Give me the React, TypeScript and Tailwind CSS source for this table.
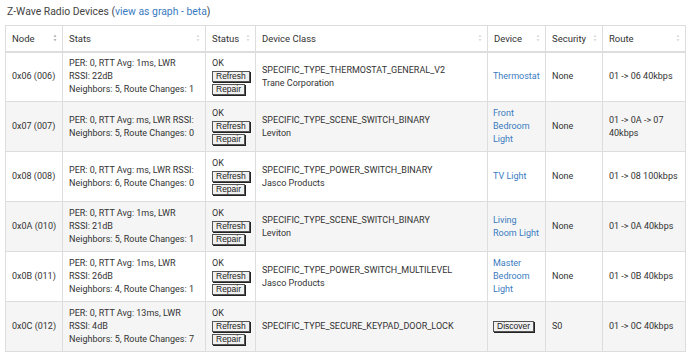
import React from 'react';

type Row = {
  node: string;
  stats: string[];
  cls: string;
  maker?: string;
  device?: string[];
  security: string;
  route: string[];
};

const rows: Row[] = [
  {
    node: '0x06 (006)',
    stats: ['PER: 0, RTT Avg: 1ms, LWR', 'RSSI: 22dB', 'Neighbors: 5, Route Changes: 1'],
    cls: 'SPECIFIC_TYPE_THERMOSTAT_GENERAL_V2',
    maker: 'Trane Corporation',
    device: ['Thermostat'],
    security: 'None',
    route: ['01 -> 06 40kbps'],
  },
  {
    node: '0x07 (007)',
    stats: ['PER: 0, RTT Avg: ms, LWR RSSI:', 'Neighbors: 5, Route Changes: 0'],
    cls: 'SPECIFIC_TYPE_SCENE_SWITCH_BINARY',
    maker: 'Leviton',
    device: ['Front', 'Bedroom', 'Light'],
    security: 'None',
    route: ['01 -> 0A -> 07', '40kbps'],
  },
  {
    node: '0x08 (008)',
    stats: ['PER: 0, RTT Avg: ms, LWR RSSI:', 'Neighbors: 6, Route Changes: 0'],
    cls: 'SPECIFIC_TYPE_POWER_SWITCH_BINARY',
    maker: 'Jasco Products',
    device: ['TV Light'],
    security: 'None',
    route: ['01 -> 08 100kbps'],
  },
  {
    node: '0x0A (010)',
    stats: ['PER: 0, RTT Avg: 1ms, LWR', 'RSSI: 21dB', 'Neighbors: 5, Route Changes: 1'],
    cls: 'SPECIFIC_TYPE_SCENE_SWITCH_BINARY',
    maker: 'Leviton',
    device: ['Living', 'Room Light'],
    security: 'None',
    route: ['01 -> 0A 40kbps'],
  },
  {
    node: '0x0B (011)',
    stats: ['PER: 0, RTT Avg: 1ms, LWR', 'RSSI: 26dB', 'Neighbors: 4, Route Changes: 1'],
    cls: 'SPECIFIC_TYPE_POWER_SWITCH_MULTILEVEL',
    maker: 'Jasco Products',
    device: ['Master', 'Bedroom', 'Light'],
    security: 'None',
    route: ['01 -> 0B 40kbps'],
  },
  {
    node: '0x0C (012)',
    stats: ['PER: 0, RTT Avg: 13ms, LWR', 'RSSI: 4dB', 'Neighbors: 5, Route Changes: 7'],
    cls: 'SPECIFIC_TYPE_SECURE_KEYPAD_DOOR_LOCK',
    security: 'S0',
    route: ['01 -> 0C 40kbps'],
  },
];

const headers = ['Node', 'Stats', 'Status', 'Device Class', 'Device', 'Security', 'Route'];

function SortIcon({ dark }: { dark?: boolean }) {
  const c = dark ? '#b5b5b5' : '#dcdcdc';
  return (
    <svg width="4" height="8" viewBox="0 0 4 8" className="shrink-0">
      <path d="M2 0.5 L3.5 3 L0.5 3 Z" fill={c} />
      <path d="M2 7.5 L3.5 5 L0.5 5 Z" fill={c} />
    </svg>
  );
}

function Btn({ label, block = true }: { label: string; block?: boolean }) {
  return (
    <button
      className={
        (block ? 'block mt-[2px] ' : '') +
        "h-[11px] px-[3px] font-['Liberation_Sans',Arial,sans-serif] text-[8.5px] leading-[9px] text-[#222] bg-[#f0f0f0] border border-[#555] shadow-[1px_1px_0_#222]"
      }
    >
      {label}
    </button>
  );
}

export default function App() {
  return (
    <div className="w-[690px] h-[357px] bg-white text-[#333] font-['Roboto',sans-serif] text-[9px] leading-[13px]">
      <div className="px-[7px] pt-[4px] h-[25px] text-[10.4px] leading-[15px] text-[#444]">
        Z-Wave Radio Devices (<a className="text-[#3a7bbf]">view as graph - beta</a>)
      </div>
      <table className="ml-[5px] w-[680px] table-fixed border-collapse border border-[#ddd]">
        <colgroup>
          <col className="w-[57px]" />
          <col className="w-[143px]" />
          <col className="w-[50px]" />
          <col className="w-[232px]" />
          <col className="w-[58px]" />
          <col className="w-[57px]" />
          <col className="w-[83px]" />
        </colgroup>
        <thead>
          <tr className="h-[26px]">
            {headers.map((h, i) => (
              <th
                key={h}
                className="border border-[#ddd] border-b-2 pl-[6px] pr-[5px] font-normal text-left text-[9.5px]"
              >
                <div className="flex items-center justify-between">
                  <span>{h}</span>
                  <SortIcon dark={i === 0} />
                </div>
              </th>
            ))}
          </tr>
        </thead>
        <tbody>
          {rows.map((r, i) => (
            <tr key={r.node} className={i % 2 === 1 ? 'h-[50px] bg-[#f5f5f5]' : 'h-[50px] bg-white'}>
              <td className="border border-[#ddd] pl-[6px] pr-[3px] align-middle whitespace-nowrap">{r.node}</td>
              <td className="border border-[#ddd] px-[6px] align-middle">
                {r.stats.map((s) => (
                  <div key={s} className="whitespace-nowrap">{s}</div>
                ))}
              </td>
              <td className="border border-[#ddd] px-[6px] align-middle">
                <div className="leading-[11px]">OK</div>
                <Btn label="Refresh" />
                <Btn label="Repair" />
              </td>
              <td className="border border-[#ddd] px-[6px] align-middle">
                <div>{r.cls}</div>
                {r.maker && <div>{r.maker}</div>}
              </td>
              <td className="border border-[#ddd] px-[5px] align-middle text-[#3a7bbf]">
                {r.device ? (
                  r.device.map((d) => <div key={d} className="whitespace-nowrap">{d}</div>)
                ) : (
                  <Btn label="Discover" block={false} />
                )}
              </td>
              <td className="border border-[#ddd] px-[6px] align-middle">{r.security}</td>
              <td className="border border-[#ddd] px-[6px] align-middle">
                {r.route.map((s) => (
                  <div key={s} className="whitespace-nowrap">{s}</div>
                ))}
              </td>
            </tr>
          ))}
        </tbody>
      </table>
    </div>
  );
}
